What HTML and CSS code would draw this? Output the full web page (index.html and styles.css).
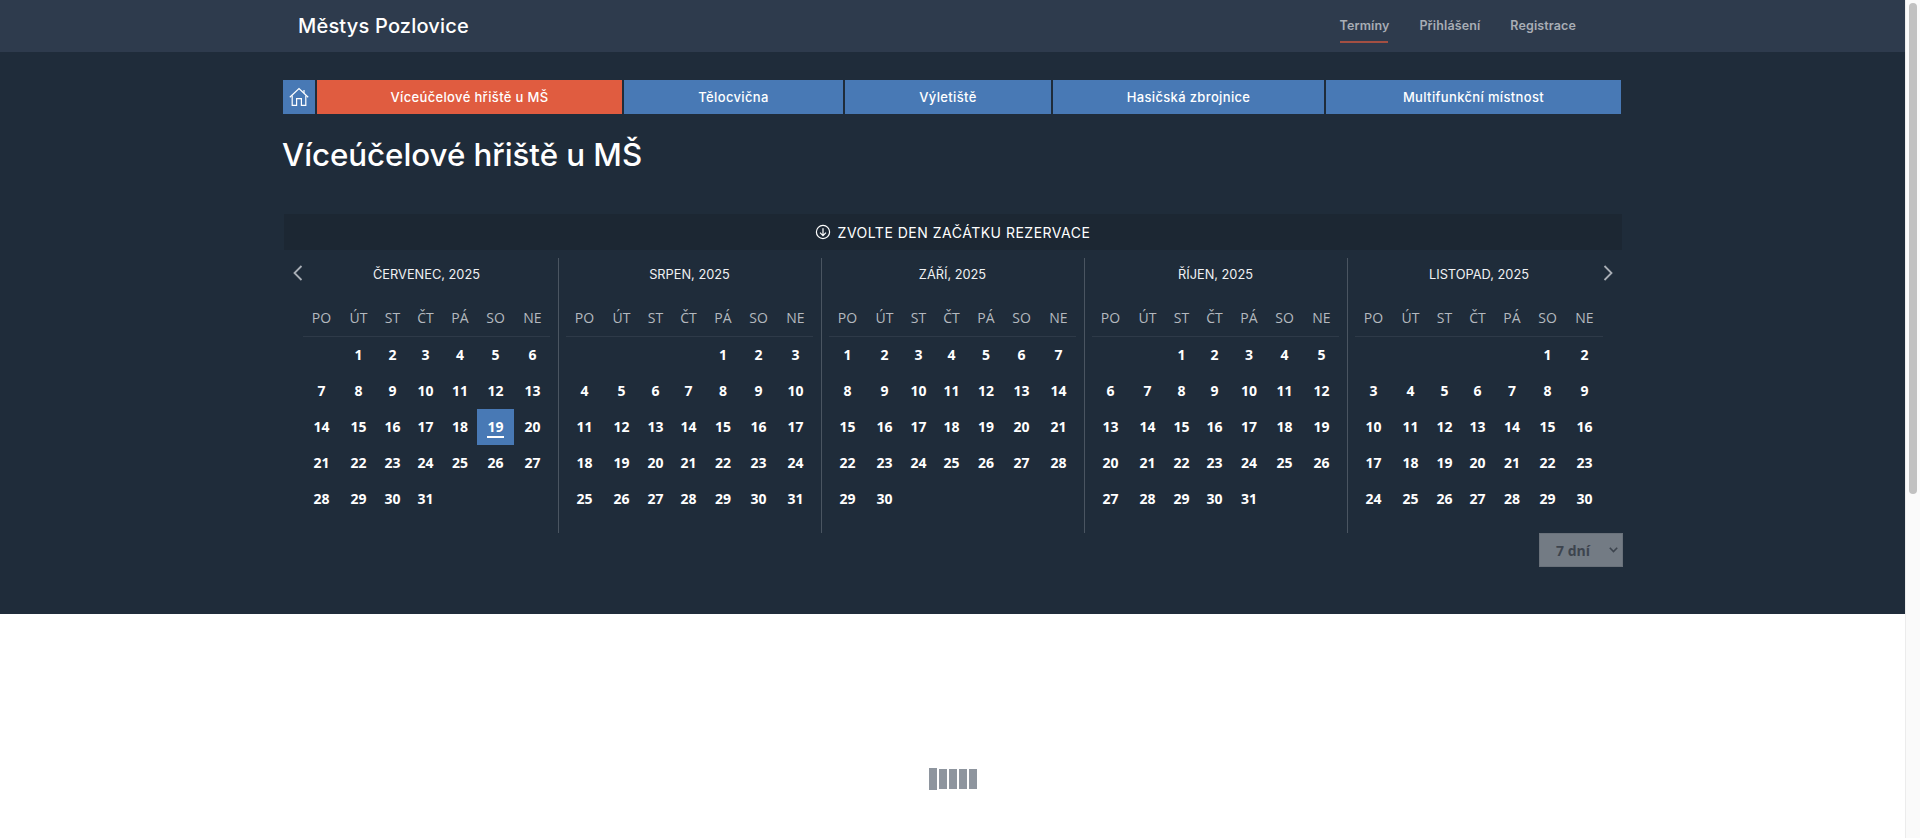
FILE: index.html
```html
<!DOCTYPE html>
<html lang="cs">
<head>
    <meta charset="UTF-8">
    <title>Městys Pozlovice</title>
    <link rel="stylesheet" href="styles.css">
</head>
<body>

<div class="page">
    <header class="topbar">
        <div class="topbar-inner">
            <a class="brand" href="#">Městys Pozlovice</a>
            <nav class="topnav">
                <a class="active" href="#">Termíny</a>
                <a href="#">Přihlášení</a>
                <a href="#">Registrace</a>
            </nav>
        </div>
    </header>

    <section class="hero">
        <div class="tabs">
            <a class="tab tab-home" href="#">
                <svg width="20" height="20" viewBox="0 0 20 20" fill="none" stroke="#fff" stroke-width="1.2">
                    <path d="M0.8 10.2 L10 1.6 L19.2 10.2"/>
                    <path d="M15 3 V6"/>
                    <path d="M3.2 8.4 V18.4 H7.6 V11.6 H12.4 V18.4 H16.8 V8.4"/>
                </svg>
            </a>
            <a class="tab tab-active" href="#">Víceúčelové hřiště u MŠ</a>
            <a class="tab tab-telocvicna" href="#">Tělocvična</a>
            <a class="tab tab-vyletiste" href="#">Výletiště</a>
            <a class="tab tab-hasici" href="#">Hasičská zbrojnice</a>
            <a class="tab tab-multi" href="#">Multifunkční místnost</a>
        </div>

        <h1>Víceúčelové hřiště u MŠ</h1>

        <div class="hint">
            <svg width="16" height="16" viewBox="0 0 16 16" fill="none" stroke="#fff" stroke-width="1.2">
                <circle cx="8" cy="8" r="6.6"/>
                <path d="M8 4.2 V11.4 M5 8.6 L8 11.6 L11 8.6"/>
            </svg>
            <span>ZVOLTE DEN ZAČÁTKU REZERVACE</span>
        </div>

        <div class="calendar">
            <svg class="arrow arrow-prev" width="10" height="16" viewBox="0 0 10 16" fill="none" stroke="#a9afb6" stroke-width="1.8"><path d="M8.5 1 L1.5 8 L8.5 15"/></svg>
            <svg class="arrow arrow-next" width="10" height="16" viewBox="0 0 10 16" fill="none" stroke="#a9afb6" stroke-width="1.8"><path d="M1.5 1 L8.5 8 L1.5 15"/></svg>

            <div class="month">
                <div class="month-title">ČERVENEC, 2025</div>
                <div class="weekdays"><span>PO</span><span>ÚT</span><span>ST</span><span>ČT</span><span>PÁ</span><span>SO</span><span>NE</span></div>
                <div class="days">
                    <span></span><a>1</a><a>2</a><a>3</a><a>4</a><a>5</a><a>6</a>
                    <a>7</a><a>8</a><a>9</a><a>10</a><a>11</a><a>12</a><a>13</a>
                    <a>14</a><a>15</a><a>16</a><a>17</a><a>18</a><a class="today"><u>19</u></a><a>20</a>
                    <a>21</a><a>22</a><a>23</a><a>24</a><a>25</a><a>26</a><a>27</a>
                    <a>28</a><a>29</a><a>30</a><a>31</a>
                </div>
            </div>

            <div class="month">
                <div class="month-title">SRPEN, 2025</div>
                <div class="weekdays"><span>PO</span><span>ÚT</span><span>ST</span><span>ČT</span><span>PÁ</span><span>SO</span><span>NE</span></div>
                <div class="days">
                    <span></span><span></span><span></span><span></span><a>1</a><a>2</a><a>3</a>
                    <a>4</a><a>5</a><a>6</a><a>7</a><a>8</a><a>9</a><a>10</a>
                    <a>11</a><a>12</a><a>13</a><a>14</a><a>15</a><a>16</a><a>17</a>
                    <a>18</a><a>19</a><a>20</a><a>21</a><a>22</a><a>23</a><a>24</a>
                    <a>25</a><a>26</a><a>27</a><a>28</a><a>29</a><a>30</a><a>31</a>
                </div>
            </div>

            <div class="month">
                <div class="month-title">ZÁŘÍ, 2025</div>
                <div class="weekdays"><span>PO</span><span>ÚT</span><span>ST</span><span>ČT</span><span>PÁ</span><span>SO</span><span>NE</span></div>
                <div class="days">
                    <a>1</a><a>2</a><a>3</a><a>4</a><a>5</a><a>6</a><a>7</a>
                    <a>8</a><a>9</a><a>10</a><a>11</a><a>12</a><a>13</a><a>14</a>
                    <a>15</a><a>16</a><a>17</a><a>18</a><a>19</a><a>20</a><a>21</a>
                    <a>22</a><a>23</a><a>24</a><a>25</a><a>26</a><a>27</a><a>28</a>
                    <a>29</a><a>30</a>
                </div>
            </div>

            <div class="month">
                <div class="month-title">ŘÍJEN, 2025</div>
                <div class="weekdays"><span>PO</span><span>ÚT</span><span>ST</span><span>ČT</span><span>PÁ</span><span>SO</span><span>NE</span></div>
                <div class="days">
                    <span></span><span></span><a>1</a><a>2</a><a>3</a><a>4</a><a>5</a>
                    <a>6</a><a>7</a><a>8</a><a>9</a><a>10</a><a>11</a><a>12</a>
                    <a>13</a><a>14</a><a>15</a><a>16</a><a>17</a><a>18</a><a>19</a>
                    <a>20</a><a>21</a><a>22</a><a>23</a><a>24</a><a>25</a><a>26</a>
                    <a>27</a><a>28</a><a>29</a><a>30</a><a>31</a>
                </div>
            </div>

            <div class="month">
                <div class="month-title">LISTOPAD, 2025</div>
                <div class="weekdays"><span>PO</span><span>ÚT</span><span>ST</span><span>ČT</span><span>PÁ</span><span>SO</span><span>NE</span></div>
                <div class="days">
                    <span></span><span></span><span></span><span></span><span></span><a>1</a><a>2</a>
                    <a>3</a><a>4</a><a>5</a><a>6</a><a>7</a><a>8</a><a>9</a>
                    <a>10</a><a>11</a><a>12</a><a>13</a><a>14</a><a>15</a><a>16</a>
                    <a>17</a><a>18</a><a>19</a><a>20</a><a>21</a><a>22</a><a>23</a>
                    <a>24</a><a>25</a><a>26</a><a>27</a><a>28</a><a>29</a><a>30</a>
                </div>
            </div>
        </div>

        <div class="length-row">
            <div class="length-select">
                <span>7 dní</span>
                <svg width="9" height="6" viewBox="0 0 9 6" fill="none" stroke="#3d444e" stroke-width="1.6"><path d="M0.8 0.8 L4.5 4.6 L8.2 0.8"/></svg>
            </div>
        </div>
    </section>

    <div class="loader">
        <span class="first"></span><span></span><span></span><span></span><span></span>
    </div>
</div>

<div class="scrollbar"><div class="thumb"></div></div>

</body>
</html>
```

FILE: styles.css
```css
html, body {
    height: 100%;
}

body {
    margin: 0;
    display: flex;
    overflow: hidden;
    background: #fff;
    font-family: "Open Sans", "Noto Sans", sans-serif;
    color: #fff;
}

a {
    color: inherit;
    text-decoration: none;
}

.page {
    flex: 1;
    min-width: 0;
}

/* Top bar */
.topbar {
    height: 52px;
    background: #2e3b4d;
}

.topbar-inner {
    width: 1278px;
    margin-left: 298px;
    height: 100%;
    display: flex;
    align-items: center;
    justify-content: space-between;
}

.brand {
    font-family: Inter, sans-serif;
    font-size: 20px;
    font-weight: 500;
    letter-spacing: 0.2px;
}

.topnav {
    display: flex;
    gap: 30px;
    font-family: Inter, sans-serif;
    font-size: 12.5px;
    font-weight: 600;
    letter-spacing: 0.12px;
    color: #a8adb5;
}

.topnav a {
    height: 52px;
    line-height: 51px;
    box-sizing: border-box;
}

.topnav a.active {
    background: linear-gradient(#a34f42, #a34f42) center 41px / 48px 2px no-repeat;
}

/* Dark panel */
.hero {
    box-sizing: border-box;
    height: 562px;
    padding-top: 28px;
    background: #1f2c3a;
}

.tabs {
    width: 1338px;
    margin: 0 0 0 283px;
    display: flex;
    gap: 2px;
}

.tab {
    height: 34px;
    display: flex;
    align-items: center;
    justify-content: center;
    background: #4879b5;
    font-family: Inter, sans-serif;
    font-size: 13px;
    font-weight: 500;
    letter-spacing: 0.35px;
}

.tab-home { width: 32px; }
.tab-active { width: 305px; background: #e05c40; }
.tab-telocvicna { width: 219px; }
.tab-vyletiste { width: 206px; }
.tab-hasici { width: 271px; }
.tab-multi { flex: 1; }

h1 {
    margin: 20px 0 0 282px;
    height: 42px;
    line-height: 42px;
    font-family: Inter, sans-serif;
    font-size: 31.3px;
    font-weight: 500;
    letter-spacing: -0.05px;
}

.hint {
    width: 1338px;
    height: 36px;
    margin: 38px auto 0;
    display: flex;
    align-items: center;
    justify-content: center;
    gap: 7px;
    background: #1c2733;
    font-family: Inter, sans-serif;
    font-size: 14px;
    letter-spacing: 0.5px;
}

.calendar {
    position: relative;
    width: 1315px;
    margin: 8px 0 0 296px;
    display: flex;
}

.arrow {
    position: absolute;
    top: 7px;
}

.arrow-prev { left: -3px; }
.arrow-next { right: -2px; }

.month {
    width: 263px;
    height: 275px;
    box-sizing: border-box;
    padding: 0 8px 0 7px;
    border-right: 1px solid #4a5561;
}

.month:last-of-type {
    border-right: none;
}

.month-title {
    height: 34px;
    line-height: 34px;
    text-align: center;
    font-family: Inter, sans-serif;
    font-size: 12.8px;
    color: #f0f1f3;
}

.weekdays, .days {
    display: grid;
    grid-template-columns: 37px 37px 31px 35px 34px 37px 37px;
    text-align: center;
}

.weekdays {
    height: 36px;
    margin-top: 8px;
    line-height: 36px;
    font-size: 14px;
    color: #b4b9bf;
    border-bottom: 1px solid #2e3a48;
}

.days {
    grid-auto-rows: 36px;
    font-size: 14px;
    font-weight: 700;
    line-height: 36px;
}

.today {
    background: #4879b5;
}

.today u {
    text-decoration: none;
    display: inline-block;
    line-height: 18px;
    border-bottom: 2px solid #fff;
}

.length-row {
    width: 1340px;
    margin-left: 283px;
    display: flex;
    justify-content: flex-end;
}

.length-select {
    box-sizing: border-box;
    width: 84px;
    height: 34px;
    display: flex;
    align-items: center;
    justify-content: space-between;
    padding: 0 4px 0 16px;
    background: #737b84;
    border: 1px solid #69717a;
    color: #3d444e;
    font-size: 14px;
    font-weight: 700;
}

/* Loading bars */
.loader {
    display: flex;
    justify-content: center;
    align-items: center;
    gap: 2px;
    height: 22px;
    margin-top: 154px;
}

.loader span {
    width: 8px;
    height: 20px;
    background: #8e959e;
}

.loader span.first {
    height: 22px;
}

/* Fake window scrollbar */
.scrollbar {
    width: 15px;
    flex: none;
    box-sizing: border-box;
    padding: 3px 3px 0;
    background: #fafafa;
    border-left: 1px solid #ececec;
}

.thumb {
    height: 491px;
    border-radius: 5px;
    background: #c1c1c1;
}
```
